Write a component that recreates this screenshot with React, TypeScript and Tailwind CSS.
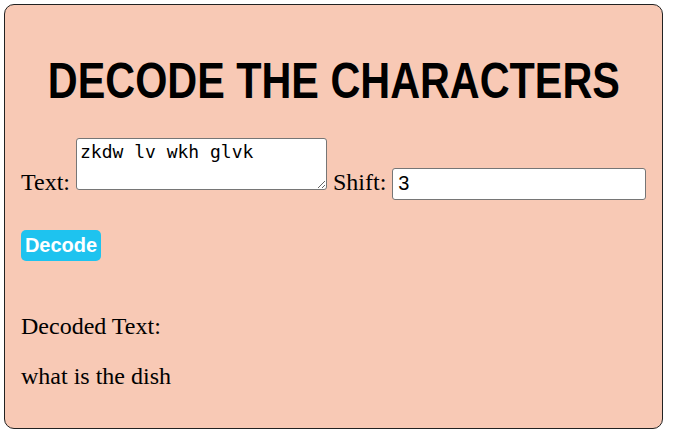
import React, { useState } from 'react';

const shiftText = (text: string, shift: number) =>
  text.replace(/[a-z]/gi, (c) => {
    const base = c <= 'Z' ? 65 : 97;
    return String.fromCharCode(((c.charCodeAt(0) - base - shift + 26 * 10) % 26) + base);
  });

const App: React.FC = () => {
  const [text, setText] = useState('zkdw lv wkh glvk');
  const [shift, setShift] = useState('3');
  const [decoded, setDecoded] = useState('what is the dish');

  return (
    <div className="p-1 font-['Liberation_Serif',serif] text-[24px] text-black">
      <div className="w-[659px] h-[425px] bg-[#f8c9b5] border border-[#222] rounded-[10px] px-4 pt-[51px]">
        <h1 className="flex justify-center font-['Liberation_Sans',sans-serif] font-bold text-[50px] leading-[50px] mb-[32px]">
          <span className="inline-block whitespace-nowrap scale-x-[0.827]">DECODE THE CHARACTERS</span>
        </h1>
        <div className="leading-[28px] whitespace-nowrap">
          <label>Text: </label>
          <textarea
            value={text}
            onChange={(e) => setText(e.target.value)}
            className="w-[251px] h-[52px] bg-white border border-[#767676] rounded-[3px] px-[3px] py-[2px] font-['DejaVu_Sans_Mono',monospace] text-[18px] leading-[21px] align-baseline"
          />
          <label> Shift: </label>
          <input
            value={shift}
            onChange={(e) => setShift(e.target.value)}
            className="w-[254px] h-[32px] bg-white border border-[#767676] rounded-[3px] px-[5px] font-['Liberation_Sans',sans-serif] text-[20px]"
          />
        </div>
        <div className="mt-[26px]">
          <button
            onClick={() => setDecoded(shiftText(text, parseInt(shift) || 0))}
            className="bg-[#1ec3ef] text-white font-bold font-['Liberation_Sans',sans-serif] text-[20px] leading-[23px] w-[80px] h-[31px] rounded-[5px]"
          >
            Decode
          </button>
        </div>
        <p className="mt-[50px] leading-[28px]">Decoded Text:</p>
        <p className="mt-[22px] leading-[28px]">{decoded}</p>
      </div>
    </div>
  );
};

export default App;
